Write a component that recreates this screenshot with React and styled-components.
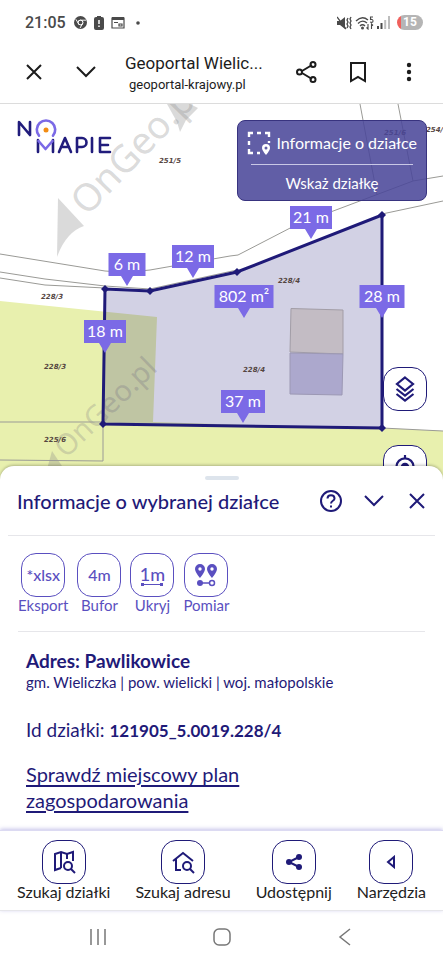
import styled, { createGlobalStyle } from "styled-components";

const GlobalStyle = createGlobalStyle`
  :root {
    --navy: #1f1a78;
    --violet: #5a4fc0;
    --line: #e6e6ea;
    --font: Lato, "Noto Sans", "Open Sans", sans-serif;
  }

  * {
    box-sizing: border-box;
  }

  body {
    margin: 0;
    background: #fff;
    font-family: var(--font);
    color: var(--navy);
  }

  button {
    font: inherit;
    color: inherit;
    background: none;
    border: none;
    padding: 0;
    cursor: pointer;
  }

  svg {
    display: block;
    flex: none;
  }
`;

const Screen = styled.div`
  display: flex;
  flex-direction: column;
  min-height: 100vh;
`;

// PHONE STATUS BAR
const StatusBar = styled.header`
  display: flex;
  align-items: center;
  justify-content: space-between;
  height: 45px;
  padding: 0 20px 0 25px;
  color: #4a4a4a;
`;

const StatusGroup = styled.div`
  display: flex;
  align-items: center;
  gap: ${(props) => props.$gap}px;
`;

const Clock = styled.span`
  font-family: Roboto, sans-serif;
  font-size: 16px;
  font-weight: 500;
  margin-right: 1px;
`;

const Battery = styled.span`
  width: 26px;
  height: 15px;
  margin-left: 4px;
  border-radius: 8px;
  background: linear-gradient(to right, #f0605c 4px, #b5b5b5 4px);
  color: #fff;
  font-family: Roboto, sans-serif;
  font-size: 12px;
  font-weight: 700;
  line-height: 15px;
  text-align: center;
`;

// BROWSER BAR
const BrowserBar = styled.div`
  display: flex;
  align-items: center;
  height: 59px;
  padding: 0 22px 4px;
  border-bottom: 1px solid #dcdcdc;
  color: #1c1c1c;
`;

const IconButton = styled.button`
  display: flex;
  align-items: center;
  justify-content: center;
  width: 24px;
  height: 24px;
`;

const BrowserActions = styled.div`
  display: flex;
  gap: ${(props) => props.$gap}px;
`;

const PageInfo = styled.div`
  flex: 1;
  min-width: 0;
  padding: 2px 24px 0 27px;
  font-family: Roboto, sans-serif;
`;

const PageTitle = styled.div`
  font-size: 17px;
  line-height: 24px;
  white-space: nowrap;
`;

const PageUrl = styled.div`
  padding-left: 4px;
  font-size: 13px;
  line-height: 20px;
`;

// MAP
const MapArea = styled.main`
  position: relative;
  flex: 1;
  min-height: 376px;
  overflow: hidden;
`;

const MapDrawing = styled.svg`
  position: absolute;
  inset: 0;
  width: 100%;
  height: 100%;
`;

const Logo = styled.a`
  position: absolute;
  top: 14px;
  left: 16px;
`;

const InfoPanel = styled.div`
  position: absolute;
  top: 16px;
  right: 16px;
  width: 190px;
  padding: 0 9px;
  border: 1px solid #38337f;
  border-radius: 8px;
  background: rgba(73, 70, 153, 0.87);
  color: #fff;
`;

const InfoRow = styled.button`
  display: flex;
  align-items: center;
  justify-content: space-between;
  width: 100%;
  height: 43px;
  font-size: 16px;
  white-space: nowrap;
`;

const PickRow = styled(InfoRow)`
  justify-content: center;
  height: 35px;
  font-size: 15px;
`;

const InfoDivider = styled.div`
  height: 1px;
  margin: 0 4px;
  background: #c9c8e6;
`;

const MapTools = styled.div`
  position: absolute;
  top: 263px;
  right: 16px;
  display: flex;
  flex-direction: column;
  gap: 34px;
`;

const Tile = styled.span`
  display: flex;
  flex-direction: column;
  align-items: center;
  justify-content: center;
  width: 44px;
  height: 44px;
  border: 1px solid currentColor;
  border-radius: 15px;
  background: #fff;
  font-size: ${(props) => props.$size || 16}px;
  line-height: 18px;
  font-weight: 500;
`;

// PLOT SHEET
const Sheet = styled.section`
  position: relative;
  margin-top: -14px;
  border-radius: 14px 14px 0 0;
  background: #fff;
  box-shadow: 0 -1px 3px rgba(0, 0, 0, 0.25);
`;

const Handle = styled.div`
  width: 34px;
  height: 4px;
  margin: 0 auto;
  border-radius: 2px;
  background: #dde4ec;
`;

const SheetTop = styled.div`
  padding-top: 10px;
`;

const SheetHeader = styled.div`
  display: flex;
  align-items: center;
  justify-content: space-between;
  height: 56px;
  margin: 0 8px;
  padding: 0 6px 14px 9px;
  border-bottom: 1px solid var(--line);
`;

const SheetTitle = styled.h1`
  margin: 0;
  font-size: 20px;
  line-height: 24px;
  font-weight: 500;
  white-space: nowrap;
`;

const SheetActions = styled.div`
  display: flex;
  gap: 19px;
`;

const ToolRow = styled.div`
  display: flex;
  gap: 9px;
  margin: 0 18px;
  padding: 17px 0 18px;
  border-bottom: 1px solid var(--line);
  color: var(--violet);
`;

const LabelledButton = styled.button`
  display: flex;
  flex-direction: column;
  align-items: center;
  font-size: ${(props) => props.$size}px;
  line-height: 16px;
  white-space: nowrap;
`;

const Details = styled.div`
  padding: 18px 26px 17px;
`;

const Address = styled.h2`
  margin: 0;
  font-size: 19px;
  line-height: 22px;
`;

const Region = styled.p`
  margin: 0 0 26px;
  font-size: 15px;
  line-height: 20px;
`;

const PlotId = styled.p`
  margin: 0 0 18px;
  font-size: 19px;
  line-height: 24px;

  strong {
    font-size: 17px;
  }
`;

const PlanLink = styled.a`
  display: block;
  max-width: 260px;
  color: inherit;
  font-size: 20px;
  line-height: 26px;
  text-underline-offset: 3px;
`;

// BOTTOM BARS
const BottomNav = styled.nav`
  position: relative;
  display: flex;
  justify-content: space-between;
  padding: 9px 17px 10px;
  border-top: 1px solid #dcdaf2;
  border-bottom: 1px solid var(--line);
  background: #fff;
  box-shadow: 0 -1px 4px rgba(90, 79, 192, 0.35);
  color: #222;

  ${Tile} {
    color: var(--navy);
  }
`;

const SystemNav = styled.div`
  display: flex;
  align-items: center;
  justify-content: space-between;
  height: 51px;
  padding: 0 86px;
  color: #777;
`;

const Svg = ({ w = 24, h = w, box = "0 0 24 24", sw = 2, children }) => (
  <svg
    width={w}
    height={h}
    viewBox={box}
    fill="none"
    stroke="currentColor"
    strokeWidth={sw}
    aria-hidden="true"
  >
    {children}
  </svg>
);

const pins = [
  { x: 127, y: 182, w: 37, text: "6 m" },
  { x: 193, y: 174, w: 42, text: "12 m" },
  { x: 311, y: 135, w: 42, text: "21 m" },
  { x: 244, y: 214, w: 59, text: "802 m²" },
  { x: 382, y: 214, w: 45, text: "28 m" },
  { x: 105, y: 249, w: 42, text: "18 m" },
  { x: 243, y: 319, w: 44, text: "37 m" },
];

const plotNumbers = [
  [159, 59, "251/5"],
  [384, 31, "251/6"],
  [426, 28, "254/"],
  [278, 179, "228/4"],
  [41, 195, "228/3"],
  [44, 265, "228/3"],
  [243, 268, "228/4"],
  [44, 338, "225/6"],
];

const corners = [
  [105, 185],
  [150, 187],
  [237, 168],
  [382, 111],
  [382, 324],
  [103, 320],
];

const Pin = ({ x, y, w, text }) => (
  <g>
    <path
      d={`M${x - w / 2} ${y - 33}h${w}v23h${-(w / 2 - 6)}l-6 10l-6 -10h${-(w / 2 - 6)}z`}
      fill="#7b6ae6"
    />
    <text
      x={x}
      y={y - 16}
      fill="#fff"
      fontSize="16"
      textAnchor="middle"
      fontFamily='Lato, "Noto Sans", sans-serif'
    >
      {text}
    </text>
  </g>
);

const PlotMap = () => (
  <MapDrawing viewBox="0 0 443 376" preserveAspectRatio="xMidYMin slice" role="img">
    <title>Mapa działki 228/4</title>
    <rect width="443" height="376" fill="#fff" />
    <path d="M0 197L157 213L153 318L443 327V376H0z" fill="#e8f0ae" />
    <path d="M382 324L443 327V376H382z" fill="#e8f0ae" />

    <g fill="#858585" fillOpacity="0.3" fontFamily='"Noto Sans", sans-serif'>
      <path d="M58 94L84 122Q66 128 57 153z" />
      <path d="M167 0H190L198 4L186 16L180 28L177 18z" />
      <text transform="translate(87 113) rotate(-46)" fontSize="38">
        OnGeo.pl
      </text>
      <path d="M52 347L62 362V376H44z" />
      <text transform="translate(66 355) rotate(-44)" fontSize="29">
        OnGeo.pl
      </text>
    </g>

    <g fill="none" stroke="#9a9a96" strokeWidth="1">
      <path d="M0 150L105 167Q125 169 150 166L230 152L238 151L296 121L413 77L443 72" />
      <path d="M0 168L45 175L105 182L150 185L237 166" />
      <path d="M0 174L45 181L105 184" />
      <path d="M360 0L377 91" />
      <path d="M398 0L413 77" />
      <path d="M382 110L443 97" />
      <path d="M0 318H103V357L0 356" />
      <path d="M382 324L443 327" />
    </g>

    <path
      d="M105 185L150 187L237 168L382 111V324L103 320z"
      fill="#1f1a78"
      fillOpacity="0.2"
      stroke="#1f1a78"
      strokeWidth="3"
    />
    <path d="M291 204.500L343 206V250L290 248z" fill="#c3bcc4" stroke="#a29da6" />
    <path d="M290 249L343 250L342 291L290 290z" fill="#aca8cd" stroke="#9c98b4" />

    {corners.map(([x, y]) => (
      <path key={`${x}-${y}`} d={`M${x} ${y - 4}l4 4l-4 4l-4 -4z`} fill="#1f1a78" />
    ))}
    {plotNumbers.map(([x, y, text], i) => (
      <text
        key={i}
        x={x}
        y={y}
        fill="#54453f"
        fontSize="7"
        fontWeight="700"
        fontStyle="italic"
        fontFamily='"DejaVu Sans", sans-serif'
      >
        {text}
      </text>
    ))}
    {pins.map((pin) => (
      <Pin key={pin.text} {...pin} />
    ))}
  </MapDrawing>
);

const LogoMark = () => (
  <svg width="96" height="42" viewBox="0 0 96 42" role="img" aria-label="No Mapie">
    <g fill="none" strokeWidth="2.600" strokeLinecap="round" strokeLinejoin="round">
      <g stroke="#211c7c">
        <path d="M3 17V4L14 17V4" />
        <path d="M22 34V22M37 22V34" />
        <path d="M43 34L49 20L55 34M45 29H53" />
        <path d="M61 34V20H66A4 4 0 0 1 66 29H61" />
        <path d="M76 20V34M94 20H84V34H94M84 27H92" />
      </g>
      <g stroke="#7b6ae6">
        <path d="M23 17.700A9.200 9.200 0 1 1 37 17.700" />
        <path d="M22.500 23L29.500 31L36.500 23" />
      </g>
    </g>
    <circle cx="30" cy="12" r="2.500" fill="#f28c13" />
  </svg>
);

const SelectPlotIcon = () => (
  <Svg w={24} sw={2.4}>
    <path d="M2 6V2H6M10 2H14M18 2H22V6M22 10V12M2 10V14M2 18V22H6M10 22H13" />
    <path
      d="M19 13a4 4 0 0 1 4 4c0 2.500-4 7-4 7s-4-4.500-4-7a4 4 0 0 1 4-4zm0 2.500a1.500 1.500 0 1 0 0 3a1.500 1.500 0 0 0 0-3z"
      fill="currentColor"
      fillRule="evenodd"
      stroke="none"
    />
  </Svg>
);

const LayersIcon = () => (
  <Svg w={20} h={26} box="0 0 20 26" sw={2.2}>
    <path d="M10 1.500L18 8L10 14.500L2 8z" />
    <path d="M1.500 13L10 19.500L18.500 13M1.500 18L10 24.500L18.500 18" />
  </Svg>
);

const LocateIcon = () => (
  <Svg w={26}>
    <circle cx="12" cy="12" r="8" />
    <circle cx="12" cy="12" r="4" fill="currentColor" stroke="none" />
    <path d="M12 1V4M12 20V23M1 12H4M20 12H23" />
  </Svg>
);

const MeasureIcon = () => (
  <Svg w={22} h={3} box="0 0 22 3" sw={1}>
    <path d="M2 1.500H20" />
    <path d="M0 0H3V3H0zM19 0H22V3H19z" fill="currentColor" stroke="none" />
  </Svg>
);

const pinPath =
  "m0-7a5 5 0 0 1 5 5c0 3-5 9-5 9s-5-6-5-9a5 5 0 0 1 5-5zm0 3.300a1.700 1.700 0 1 0 0 3.400a1.700 1.700 0 0 0 0-3.400z";

const RouteIcon = () => (
  <Svg w={24} sw={1.5}>
    <g fill="currentColor" fillRule="evenodd" stroke="none">
      <path d={`M6 8${pinPath}`} />
      <path d={`M18 8${pinPath}`} />
      <circle cx="6" cy="20" r="3" />
    </g>
    <path d="M6 20H15" />
    <circle cx="18" cy="20" r="2.500" />
  </Svg>
);

const MapSearchIcon = () => (
  <Svg w={24}>
    <path d="M9 18L3 20V4L9 2L15 4L21 2V11M9 2V18M15 4V9" />
    <circle cx="16" cy="16" r="4" />
    <path d="M19 19L23 23" />
  </Svg>
);

const HomeSearchIcon = () => (
  <Svg w={24}>
    <path d="M2 11L12 3L22 11M5 9V20H10" />
    <circle cx="16" cy="16" r="4" />
    <path d="M19 19L23 23" />
  </Svg>
);

const ShareIcon = () => (
  <Svg w={18} box="0 0 18 18">
    <path d="M14 4L4 9L14 14" />
    <g fill="currentColor" stroke="none">
      <circle cx="14" cy="4" r="3" />
      <circle cx="4" cy="9" r="3" />
      <circle cx="14" cy="14" r="3" />
    </g>
  </Svg>
);

const CloseIcon = () => (
  <Svg>
    <path d="M5 5L19 19M19 5L5 19" />
  </Svg>
);

const ChevronIcon = () => (
  <Svg>
    <path d="M3 7L12 16L21 7" />
  </Svg>
);

const StatusIcons = () => (
  <StatusGroup $gap={7}>
    <Clock>21:05</Clock>
    <Svg w={13} box="0 0 14 14">
      <circle cx="7" cy="7" r="5" strokeWidth="4" />
      <circle cx="7" cy="7" r="2.500" fill="currentColor" stroke="#fff" strokeWidth="1" />
      <path d="M7 4.500H13M4.800 8.200L2 3.500M9.200 8.200L6.500 13" stroke="#fff" strokeWidth="1" />
    </Svg>
    <Svg w={10} h={14} box="0 0 10 14">
      <path d="M3 0H7V1H8Q10 1 10 3V12Q10 14 8 14H2Q0 14 0 12V3Q0 1 2 1H3z" fill="currentColor" stroke="none" />
      <path d="M5 4V8M5 9.500V11" stroke="#fff" strokeWidth="1.500" />
    </Svg>
    <Svg w={14} h={13} box="0 0 14 13" sw={1.2}>
      <path d="M1 2H13V12H1z" />
      <path d="M1 1H13V4H1z" fill="currentColor" stroke="none" />
      <path d="M3 6.500H7M8 8H11V10H8z" />
    </Svg>
    <Svg w={18} h={4} box="0 0 18 4">
      <circle cx="6" cy="2" r="1.800" fill="currentColor" stroke="none" />
    </Svg>
  </StatusGroup>
);

const SignalIcons = () => (
  <StatusGroup $gap={3}>
    <Svg w={15} h={14} box="0 0 15 14" sw={1.3}>
      <path d="M0 5H3L8 1V13L3 9H0z" fill="currentColor" stroke="none" />
      <path d="M0 1L9 13M11 2L10 4L11 6L10 8L11 10L10 12M14 1L13 3L14 5L13 7L14 9L13 11L14 13" />
    </Svg>
    <Svg w={19} h={14} box="0 0 19 14" sw={1.4}>
      <path d="M1 5Q7-1 13 4M3 7.500Q7.500 3 12 7M5 10Q7.500 7.500 10 10" />
      <circle cx="7.500" cy="12" r="1.500" fill="currentColor" stroke="none" />
      <path d="M18 1H15.500V3.500Q18 3 18 5T15 6M13 8V13L11.500 11.500M16.500 13V8L18 9.500" strokeWidth="1.100" />
    </Svg>
    <Svg w={13} h={13} box="0 0 13 13" sw={2}>
      <path d="M1 10V13M4.500 7V13" />
      <path d="M8.200 4V13M12 0V13" stroke="#bdbdbd" />
    </Svg>
    <Battery>15</Battery>
  </StatusGroup>
);

const tools = [
  { label: "Eksport", content: "*xlsx" },
  { label: "Bufor", content: "4m" },
  { label: "Ukryj", content: <>1m<MeasureIcon /></>, size: 18 },
  { label: "Pomiar", content: <RouteIcon /> },
];

const navItems = [
  { label: "Szukaj działki", icon: <MapSearchIcon /> },
  { label: "Szukaj adresu", icon: <HomeSearchIcon /> },
  { label: "Udostępnij", icon: <ShareIcon /> },
  {
    label: "Narzędzia",
    icon: (
      <Svg w={10} h={14} box="0 0 10 14">
        <path d="M8 2V12L2 7z" />
      </Svg>
    ),
  },
];

const App = () => (
  <>
    <GlobalStyle />
    <Screen>
      <StatusBar>
        <StatusIcons />
        <SignalIcons />
      </StatusBar>
      <BrowserBar>
        <BrowserActions $gap={28}>
          <IconButton aria-label="Zamknij kartę">
            <CloseIcon />
          </IconButton>
          <IconButton aria-label="Zwiń kartę">
            <ChevronIcon />
          </IconButton>
        </BrowserActions>
        <PageInfo>
          <PageTitle>Geoportal Wielic...</PageTitle>
          <PageUrl>geoportal-krajowy.pl</PageUrl>
        </PageInfo>
        <BrowserActions $gap={27}>
          <IconButton aria-label="Udostępnij stronę">
            <Svg>
              <path d="M7 11L17 5M7 13L17 19" />
              <circle cx="4.500" cy="12" r="2.500" />
              <circle cx="18" cy="4.500" r="2.500" />
              <circle cx="18" cy="19.500" r="2.500" />
            </Svg>
          </IconButton>
          <IconButton aria-label="Zakładka">
            <Svg>
              <path d="M5 3H19V21L12 17L5 21z" />
            </Svg>
          </IconButton>
          <IconButton aria-label="Więcej">
            <Svg>
              <g fill="currentColor" stroke="none">
                <circle cx="12" cy="5" r="2.200" />
                <circle cx="12" cy="12" r="2.200" />
                <circle cx="12" cy="19" r="2.200" />
              </g>
            </Svg>
          </IconButton>
        </BrowserActions>
      </BrowserBar>

      <MapArea>
        <PlotMap />
        <Logo href="#">
          <LogoMark />
        </Logo>
        <InfoPanel>
          <InfoRow>
            <SelectPlotIcon />
            Informacje o działce
          </InfoRow>
          <InfoDivider />
          <PickRow>Wskaż działkę</PickRow>
        </InfoPanel>
        <MapTools>
          <button aria-label="Warstwy">
            <Tile>
              <LayersIcon />
            </Tile>
          </button>
          <button aria-label="Moja lokalizacja">
            <Tile>
              <LocateIcon />
            </Tile>
          </button>
        </MapTools>
      </MapArea>

      <Sheet>
        <SheetTop>
          <Handle />
        </SheetTop>
        <SheetHeader>
          <SheetTitle>Informacje o wybranej działce</SheetTitle>
          <SheetActions>
            <IconButton aria-label="Pomoc">
              <Svg>
                <circle cx="12" cy="12" r="10" />
                <path d="M8.500 9.500C8.500 5 15.500 5 15.500 9.500C15.500 12 12 11.500 12 14.500M12 16.500V18.500" />
              </Svg>
            </IconButton>
            <IconButton aria-label="Zwiń">
              <ChevronIcon />
            </IconButton>
            <IconButton aria-label="Zamknij">
              <CloseIcon />
            </IconButton>
          </SheetActions>
        </SheetHeader>
        <ToolRow>
          {tools.map((tool) => (
            <LabelledButton key={tool.label} $size={15}>
              <Tile $size={tool.size}>{tool.content}</Tile>
              {tool.label}
            </LabelledButton>
          ))}
        </ToolRow>
        <Details>
          <Address>Adres: Pawlikowice</Address>
          <Region>gm. Wieliczka | pow. wielicki | woj. małopolskie</Region>
          <PlotId>
            Id działki: <strong>121905_5.0019.228/4</strong>
          </PlotId>
          <PlanLink href="#">Sprawdź miejscowy plan zagospodarowania</PlanLink>
        </Details>
      </Sheet>

      <BottomNav>
        {navItems.map((item) => (
          <LabelledButton key={item.label} $size={16}>
            <Tile>{item.icon}</Tile>
            {item.label}
          </LabelledButton>
        ))}
      </BottomNav>
      <SystemNav>
        <IconButton aria-label="Ostatnie">
          <Svg>
            <path d="M5 4V20M12 4V20M19 4V20" strokeWidth="1.500" />
          </Svg>
        </IconButton>
        <IconButton aria-label="Ekran główny">
          <Svg>
            <rect x="4" y="4" width="16" height="16" rx="5" strokeWidth="1.500" />
          </Svg>
        </IconButton>
        <IconButton aria-label="Wstecz">
          <Svg>
            <path d="M17 4L7 12L17 20" strokeWidth="1.500" />
          </Svg>
        </IconButton>
      </SystemNav>
    </Screen>
  </>
);

export default App;
